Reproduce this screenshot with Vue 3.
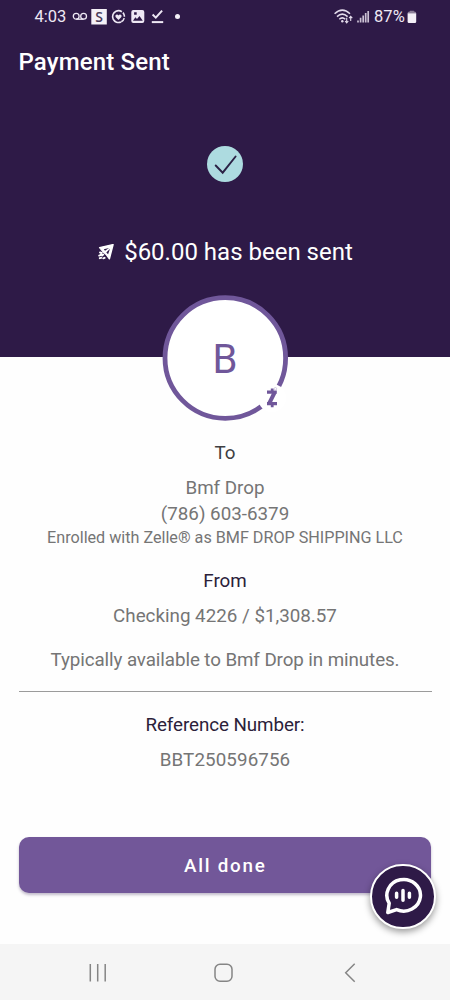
<script setup>
const account = { name: 'Bmf Drop', phone: '(786) 603-6379' }
</script>

<template>
  <main class="screen">
    <header class="hero">
      <div class="status">
        <span class="clock">4:03</span>
        <svg class="notifications" width="112" height="18" viewBox="0 0 112 18" fill="none" stroke="#eee8f4">
          <g stroke-width="1.3">
            <circle cx="4.2" cy="8.3" r="2.9" />
            <circle cx="11.6" cy="8.3" r="2.9" />
            <path d="M4.2 11.2h7.4" />
          </g>
          <path d="M19.3 1h15.5v15.5H19.3z" fill="#f4f0f7" stroke="none" />
          <text x="27.1" y="13.8" text-anchor="middle" class="badge-letter">S</text>
          <circle cx="46.5" cy="8.6" r="5.9" stroke-width="1.6" stroke-dasharray="24 1.3 4.5 1.3 4.7 1.3" transform="rotate(65 46.5 8.6)" />
          <path d="M46.5 11.9l-2.7-2.7c-1.5-1.9 1.3-3.7 2.7-1.8 1.4-1.9 4.2-.1 2.7 1.8z" fill="#eee8f4" stroke="none" />
          <path fill-rule="evenodd" d="M61.3 2.1h9a2 2 0 0 1 2 2v9a2 2 0 0 1-2 2h-9a2 2 0 0 1-2-2v-9a2 2 0 0 1 2-2zM61 12.8h9.8l-3.3-4.7-2.5 3-1.6-1.8zM62.1 4.2v2.6h2.6V4.2z" fill="#eee8f4" stroke="none" />
          <path d="M80.6 6.5l3.2 3.1 6.3-7" stroke-width="2" />
          <path d="M79.8 14.1h11.4" stroke-width="2" />
          <circle cx="105.5" cy="8.4" r="2.5" fill="#f4f0f7" stroke="none" />
        </svg>
        <svg class="signals" width="36" height="18" viewBox="0 0 36 18" fill="none" stroke="#e4dcec">
          <g stroke-width="1.5">
            <path d="M.6 5.7q7.7-7.2 15.4 0" />
            <path d="M3 8.6q5.3-5 10.6 0" />
            <path d="M5.3 11.3q3-2.8 6 0" />
          </g>
          <circle cx="8.3" cy="13.2" r="1.2" fill="#e4dcec" stroke="none" />
          <path d="M12.7 9.8v4.7M11.1 13l1.6 1.8 1.6-1.8M16.7 13V8.4M15.1 10.2l1.6-1.8 1.6 1.8" stroke-width="1.1" />
          <path d="M24 14.5v-2M26.6 14.5v-4.7M29.2 14.5V7.6M31.7 14.5V5M34.2 14.5V3" stroke-width="1.7" stroke="#cbc1d4" />
        </svg>
        <span class="percent">87%</span>
        <svg class="battery" width="10" height="14" viewBox="0 0 10 14">
          <path d="M.6 3.2q0-1.7 1.7-1.7h.6V.7h4v.8h.6q1.7 0 1.7 1.7z" fill="#8c7f98" />
          <path d="M.6 3.2h8.6v8.5q0 1.3-1.3 1.3h-6Q.6 13 .6 11.7z" fill="#f4f0f7" />
        </svg>
      </div>
      <h1 class="title">Payment Sent</h1>
      <svg class="success" width="36" height="36" viewBox="0 0 36 36">
        <circle cx="18" cy="18" r="18" fill="#addbe0" />
        <path d="M8.7 19.5l7 7.2L28.6 10.5" fill="none" stroke="#2b2145" stroke-width="1.9" stroke-linecap="round" />
      </svg>
      <div class="message">
        <svg width="17" height="17" viewBox="0 0 17 17">
          <path d="M16.1.6L2.6 3.6l3.2 3.8 3.7 3.4 2.9 4z" fill="#fff" stroke="#fff" stroke-width="1.4" stroke-linejoin="round" />
          <path d="M12 3.9L6.8 5.3l1.2 1.5zM13 4.8L9.3 8.6l1.8 1.7z" fill="#2e1a47" />
          <path d="M3 8.5l1.8.4M2.2 11.6l1.2-.4.8-1M5.1 11.4l1.1-.8M2.8 14.2l1.3-.4M6.2 14.3l1.4-.5" fill="none" stroke="#fff" stroke-width="1.9" stroke-linecap="round" />
        </svg>
        <span>$60.00 has been sent</span>
      </div>
    </header>

    <div class="avatar">
      <svg width="126" height="126" viewBox="0 0 126 126">
        <circle cx="63.3" cy="63" r="60.3" fill="#fff" stroke="#70579a" stroke-width="4.8" />
        <circle cx="110" cy="103" r="14" fill="#fff" />
        <path d="M105 97.1h9.8M105 108.6h10" fill="none" stroke="#70579a" stroke-width="3.2" />
        <path d="M112.6 97.5l-5.4 10.8" fill="none" stroke="#70579a" stroke-width="4" />
        <path d="M110.2 93.5v4M110.2 108.5v3.8" fill="none" stroke="#70579a" stroke-width="2.8" />
        <circle cx="113.4" cy="93.8" r="1.3" fill="none" stroke="#bcaed0" stroke-width=".6" />
      </svg>
      <span>B</span>
    </div>

    <section class="details">
      <h2 class="to">To</h2>
      <p class="name">{{ account.name }}</p>
      <p class="phone">{{ account.phone }}</p>
      <p class="enrolled">Enrolled with Zelle® as BMF DROP SHIPPING LLC</p>
      <h2 class="from">From</h2>
      <p class="funding">Checking 4226 / $1,308.57</p>
      <p class="timing">Typically available to {{ account.name }} in minutes.</p>
      <hr>
      <h2 class="reference">Reference Number:</h2>
      <p class="number">BBT250596756</p>
    </section>

    <div class="actions">
      <button class="done">All done</button>
      <button class="chat" aria-label="Chat">
        <svg width="40" height="40" viewBox="0 0 40 40" fill="none" stroke="#fff" stroke-linecap="round" stroke-linejoin="round">
          <path d="M4.8 36.5l1.4-9.2a16.8 15.8 0 1 1 7.4 6.3z" stroke-width="3.5" />
          <path d="M13.6 17.2v4.1M20 14.4v9.8M26.4 17.2v4.1" stroke-width="3.5" />
        </svg>
      </button>
    </div>

    <nav class="system-nav">
      <svg width="450" height="56" viewBox="0 0 450 56" fill="none" stroke="#858585" stroke-width="1.5">
        <path d="M90.3 20v17.5M97.7 20v17.5M105.2 20v17.5" />
        <rect x="215" y="20.2" width="17" height="17" rx="5" />
        <path d="M354.7 19.8l-9 9 9 9" />
      </svg>
    </nav>
  </main>
</template>

<style>
body { margin: 0; background: #fff; }
</style>

<style scoped>
.screen {
  position: relative;
  display: flex;
  flex-direction: column;
  width: 450px;
  height: 1000px;
  overflow: hidden;
  background: #fefefe;
  font-family: Roboto, "Liberation Sans", sans-serif;
}
h1, h2, p { margin: 0; font-weight: 400; }
.hero {
  display: flex;
  flex: none;
  flex-direction: column;
  height: 357px;
  color: #fff;
  background: #2e1a47;
}
.status {
  display: flex;
  align-items: center;
  height: 32px;
  padding: 1px 33px 0 34.5px;
  box-sizing: border-box;
  color: #eee8f4;
}
.clock { width: 37.5px; font-size: 16.5px; white-space: nowrap; }
.notifications { flex: none; }
.badge-letter { fill: #493a58; stroke: none; font: 600 14px "Open Sans", sans-serif; }
.signals { margin-left: auto; }
.percent { margin-left: 4px; font-size: 16.5px; letter-spacing: .15px; }
.battery { margin-left: 2px; }
.title { margin: 14px 0 0 18.5px; font-size: 24px; line-height: 32px; font-weight: 500; letter-spacing: .15px; }
.success { margin: 68px auto 0; }
.message {
  display: flex;
  align-items: center;
  justify-content: center;
  gap: 10px;
  height: 40px;
  margin-top: 50px;
  font-size: 24px;
}
.avatar {
  position: relative;
  display: grid;
  flex: none;
  place-items: center;
  width: 126px;
  height: 126px;
  margin: -62.5px auto 0;
  color: #70579a;
}
.avatar svg, .avatar span { grid-area: 1 / 1; }
.avatar span { z-index: 1; font-size: 40px; line-height: 46px; padding-top: 4px; }
.details {
  display: flex;
  flex-direction: column;
  align-items: center;
  padding: 20.5px 18.5px 0;
  color: #757575;
  font-size: 18.8px;
  line-height: 24px;
  white-space: nowrap;
}
.details h2 { font-size: 18.8px; color: #2b2139; }
.details .to { color: #3f3f43; }
.name { margin-top: 11px; }
.phone { margin-top: 2px; }
.enrolled { font-size: 16.2px; letter-spacing: -.02px; }
.from { margin-top: 19px; }
.funding { margin-top: 11px; }
.timing { margin-top: 20px; letter-spacing: -.09px; }
hr { width: 413px; height: 1px; margin: 19px 0 0; border: 0; background: #9b9b9b; }
.reference { margin-top: 20.5px; letter-spacing: -.08px; }
.number { margin-top: 11px; letter-spacing: .1px; }
.actions {
  position: absolute;
  top: 837px;
  left: 18.5px;
  width: 412.5px;
}
.done {
  width: 100%;
  height: 56px;
  padding: 1px 0 0 1px;
  border: 0;
  border-radius: 10px;
  color: #fff;
  background: #725799;
  font: 500 18.8px Roboto, sans-serif;
  letter-spacing: 1.75px;
  box-shadow: 0 2px 3px #47326455;
}
.chat {
  position: absolute;
  top: 26.5px;
  left: 351.5px;
  display: grid;
  place-items: center;
  width: 65.5px;
  height: 65.5px;
  padding: 0;
  border: 2px solid #fff;
  border-radius: 50%;
  background: #2e1a47;
  box-shadow: 0 3px 7px #0006;
}
.system-nav { height: 56px; margin-top: auto; background: #f5f5f5; }
.system-nav svg { display: block; }
</style>
